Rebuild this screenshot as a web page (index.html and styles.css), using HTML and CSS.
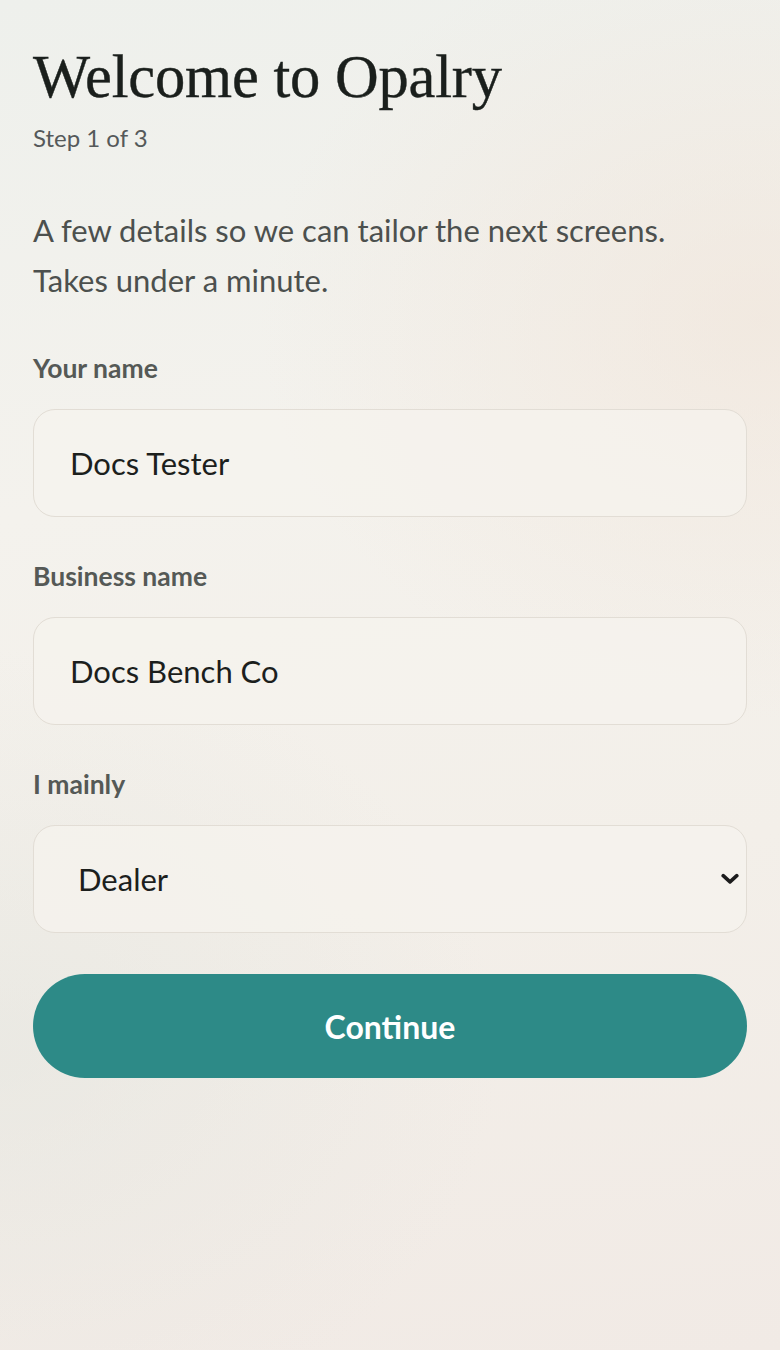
FILE: index.html
```html
<!DOCTYPE html>
<html lang="en">
<head>
<meta charset="utf-8">
<title>Welcome to Opalry</title>
<link rel="stylesheet" href="styles.css">
</head>
<body>
<main class="page">
  <header class="head">
    <h1 class="title">Welcome to Opalry</h1>
    <p class="step">Step 1 of 3</p>
  </header>
  <p class="intro">A few details so we can tailor the next screens. Takes under a minute.</p>
  <form class="form">
    <label class="field">
      <span class="label">Your name</span>
      <input class="input" type="text" value="Docs Tester">
    </label>
    <label class="field">
      <span class="label">Business name</span>
      <input class="input" type="text" value="Docs Bench Co">
    </label>
    <label class="field">
      <span class="label">I mainly</span>
      <span class="select-wrap">
        <select class="select">
          <option selected>Dealer</option>
          <option>Collector</option>
          <option>Maker</option>
        </select>
        <svg class="chev" width="18" height="12" viewBox="0 0 18 12" aria-hidden="true"><path d="M2.2 2.6 L9 8.8 L15.8 2.6" fill="none" stroke="#1c1c1c" stroke-width="3.6" stroke-linecap="round" stroke-linejoin="round"/></svg>
      </span>
    </label>
    <button class="btn" type="button">Continue</button>
  </form>
</main>
</body>
</html>
```
FILE: styles.css
```css
html, body {
  margin: 0;
  padding: 0;
}
body {
  min-height: 1350px;
  background:
    radial-gradient(ellipse 500px 400px at 760px 320px, rgba(240, 226, 214, 0.55), rgba(240, 226, 214, 0) 100%),
    radial-gradient(ellipse 500px 400px at 0px 1050px, rgba(226, 228, 222, 0.5), rgba(226, 228, 222, 0) 100%),
    linear-gradient(170deg, #eef0ec 0%, #f4f2ed 35%, #f3efe9 65%, #f1eae5 100%);
  font-family: "Lato", "Liberation Sans", sans-serif;
  color: #1c1f1d;
}
.page {
  padding: 45px 33px 0 33px;
  display: flex;
  flex-direction: column;
}
.head {
  display: flex;
  flex-direction: column;
}
.title {
  margin: 0;
  font-family: "Liberation Serif", "DejaVu Serif", serif;
  font-weight: 400;
  font-size: 60.5px;
  line-height: 64px;
  letter-spacing: -0.2px;
  color: #1a1f1c;
  -webkit-text-stroke: 0.4px #1a1f1c;
}
.step {
  margin: 14px 0 0 0;
  font-size: 24px;
  line-height: 30px;
  color: #55595a;
}
.intro {
  margin: 52px 0 0 0;
  font-size: 31px;
  line-height: 50px;
  color: #4c504e;
  max-width: 700px;
}
.form {
  margin-top: 48px;
  display: flex;
  flex-direction: column;
  gap: 44px;
}
.field {
  display: flex;
  flex-direction: column;
  gap: 26px;
}
.label {
  font-size: 26.5px;
  line-height: 30px;
  font-weight: 700;
  color: #555956;
}
.input,
.select {
  box-sizing: border-box;
  width: 100%;
  height: 108px;
  margin: 0;
  border: 1.5px solid #e2ddd5;
  border-radius: 22px;
  background: rgba(246, 243, 237, 0.75);
  font-family: "Lato", "Liberation Sans", sans-serif;
  font-size: 31px;
  color: #1c1f1d;
  padding: 0 36px;
  outline: none;
}
.select-wrap {
  position: relative;
  display: block;
}
.select {
  appearance: none;
  -webkit-appearance: none;
  padding-left: 44px;
}
.chev {
  position: absolute;
  right: 8px;
  top: 48px;
  pointer-events: none;
}
.btn {
  margin-top: -3px;
  height: 104px;
  border: none;
  border-radius: 52px;
  background: #2d8a87;
  color: #ffffff;
  font-family: "Lato", "Liberation Sans", sans-serif;
  font-weight: 700;
  font-size: 32px;
  cursor: pointer;
}
```
